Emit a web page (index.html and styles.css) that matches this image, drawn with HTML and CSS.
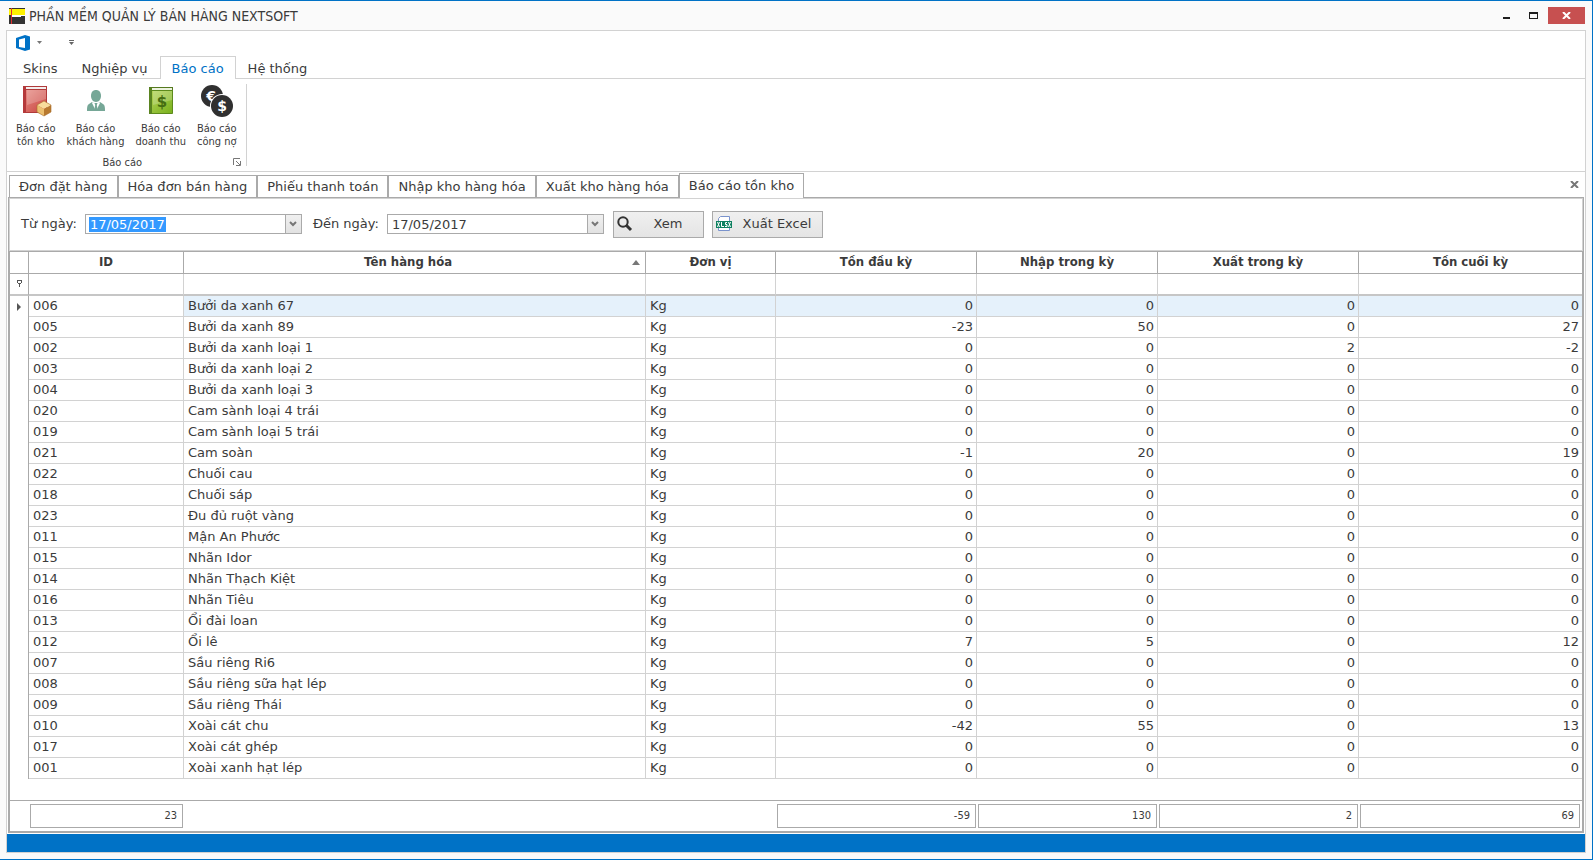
FILE: index.html
```
<!DOCTYPE html>
<html lang="vi">
<head>
    <meta charset="UTF-8">
    <meta name="viewport" content="width=device-width, initial-scale=1.0">
    <title>PHẦN MỀM QUẢN LÝ BÁN HÀNG NEXTSOFT</title>
    <link rel="stylesheet" href="styles.css">
</head>
<body>
<div class="window">
    <header class="titlebar">
        <svg class="app-icon" width="16" height="16" viewBox="0 0 16 16">
            <path fill="#333" d="M0 0h16v16H0z"/>
            <path fill="#fff200" d="M0 1h16v6H0z"/>
            <path fill="#fff" d="M3 7h13v1h-4v1H3z"/>
            <path fill="#e03030" d="M2 0h1v16H2z"/>
        </svg>
        <h1>PHẦN MỀM QUẢN LÝ BÁN HÀNG NEXTSOFT</h1>
        <div class="window-buttons">
            <button type="button" aria-label="Thu nhỏ">
                <svg width="9" height="9" viewBox="0 0 9 9"><path fill="#1e1e1e" d="M1 6h7v2H1z"/></svg>
            </button>
            <button type="button" aria-label="Phóng to">
                <svg width="9" height="7" viewBox="0 0 9 7"><path fill="#1e1e1e" fill-rule="evenodd" d="M0 0h9v7H0zM1 2v4h7V2z"/></svg>
            </button>
            <button type="button" class="close" aria-label="Đóng">
                <svg width="9" height="7" viewBox="0 0 9 7"><path stroke="#fff" stroke-width="2" d="M1 0l7 7M8 0L1 7"/></svg>
            </button>
        </div>
    </header>

    <div class="frame">
        <div class="quickbar">
            <button type="button" class="office" aria-label="Menu">
                <svg width="14" height="16" viewBox="0 0 14 16"><path fill="#0072c6" fill-rule="evenodd" d="M0 3l9-3 5 1.500v13L9 16l-9-3zM3 4.500v7.500l6 1V3z"/></svg>
                <svg width="5" height="3" viewBox="0 0 5 3"><path fill="#777" d="M0 0h5L2.500 3z"/></svg>
            </button>
            <button type="button" class="customize" aria-label="Tùy chỉnh">
                <svg width="5" height="5" viewBox="0 0 5 5"><path fill="#666" d="M0 0h5v1H0zM0 2h5L2.500 5z"/></svg>
            </button>
        </div>
        <nav class="ribbon-tabs">
            <a href="#">Skins</a>
            <a href="#">Nghiệp vụ</a>
            <a href="#" class="active">Báo cáo</a>
            <a href="#">Hệ thống</a>
        </nav>

        <div class="ribbon">
            <div class="group">
                <div class="group-items">
                    <button type="button">
                        <svg width="32" height="32" viewBox="0 0 32 32">
                            <defs>
                                <linearGradient id="red" x2="1" y2="1"><stop stop-color="#e89088"/><stop offset="1" stop-color="#c8443f"/></linearGradient>
                            </defs>
                            <path fill="#b03a3a" d="M3 1h24v4H3z"/>
                            <path fill="#f4eeee" d="M5 2h21v2H5z"/>
                            <path fill="url(#red)" stroke="#b03a3a" d="M3.500 4.500h23v23h-23z"/>
                            <path fill="#b5393b" d="M3 2h3v26H3z"/>
                            <path fill="#fff" opacity=".2" d="M7 5h19v9L7 20z"/>
                            <path fill="#f8dc9c" d="M17 20l7-4 7 4-7 4z"/>
                            <path fill="#ecc070" d="M17 20l7 4v7l-7-4z"/>
                            <path fill="#b87a30" d="M31 20l-7 4v7l7-4z"/>
                            <path fill="none" stroke="#a86c28" stroke-width=".6" d="M17 20l7-4 7 4v7l-7 4-7-4z"/>
                        </svg>
                        <span>Báo cáo<br>tồn kho</span>
                    </button>
                    <button type="button">
                        <svg width="32" height="32" viewBox="0 0 32 32">
                            <path fill="#76a797" d="M11 11c0-4 2-6 5-6s5 2 5 6c0 3-2 6-5 6s-5-3-5-6z"/>
                            <path fill="#76a797" d="M12 17l-3 2c-2 1-2 4-2 7h18c0-3 0-6-2-7l-3-2-4 2z"/>
                            <path fill="#fff" d="M12 18l4 8 4-8-1-1-3 2-3-2z"/>
                            <path fill="#76a797" d="M14.500 18h3l-.7 2 1 6h-3.600l1-6z"/>
                        </svg>
                        <span>Báo cáo<br>khách hàng</span>
                    </button>
                    <button type="button">
                        <svg width="32" height="32" viewBox="0 0 32 32">
                            <defs>
                                <linearGradient id="green" x2="1" y2="1"><stop stop-color="#b7d65c"/><stop offset="1" stop-color="#78b01c"/></linearGradient>
                            </defs>
                            <path fill="#55791f" d="M4 2h24v4H4z"/>
                            <path fill="#edf3e0" d="M6 3h21v2H6z"/>
                            <path fill="url(#green)" stroke="#5d8a1c" d="M4.500 5.500h23v23h-23z"/>
                            <path fill="#5a8420" d="M4 3h3v26H4z"/>
                            <path fill="#fff" opacity=".2" d="M8 6h19v9L8 20z"/>
                            <text class="coin" x="17" y="22" fill="#456d12" font-size="15">$</text>
                        </svg>
                        <span>Báo cáo<br>doanh thu</span>
                    </button>
                    <button type="button">
                        <svg width="32" height="32" viewBox="0 0 32 32">
                            <circle cx="11" cy="11" r="11" fill="#303030"/>
                            <text class="coin" x="10" y="16" fill="#fff" font-size="14">€</text>
                            <circle cx="21" cy="21" r="12" fill="#fff"/>
                            <circle cx="21" cy="21" r="11" fill="#303030"/>
                            <text class="coin" x="21" y="26" fill="#fff" font-size="14">$</text>
                        </svg>
                        <span>Báo cáo<br>công nợ</span>
                    </button>
                </div>
                <div class="group-caption">
                    <span>Báo cáo</span>
                    <button type="button" aria-label="Mở rộng">
                        <svg width="8" height="8" viewBox="0 0 8 8"><path fill="none" stroke="#777" d="M.5 7V.5H7M3 3l4 4M7.500 3v4.500H3"/></svg>
                    </button>
                </div>
            </div>
        </div>

        <main class="workspace">
            <nav class="doc-tabs">
                <a href="#">Đơn đặt hàng</a>
                <a href="#">Hóa đơn bán hàng</a>
                <a href="#">Phiếu thanh toán</a>
                <a href="#">Nhập kho hàng hóa</a>
                <a href="#">Xuất kho hàng hóa</a>
                <a href="#" class="active">Báo cáo tồn kho</a>
                <button type="button" class="tab-close" aria-label="Đóng tab">
                    <svg width="9" height="7" viewBox="0 0 9 7"><path stroke="#777" stroke-width="2" d="M1 0l7 7M8 0L1 7"/></svg>
                </button>
            </nav>

            <section class="pane">
                <form class="filters">
                    <label for="from">Từ ngày:</label>
                    <div class="date">
                        <div class="date-text selected"><input id="from" type="text" value="17/05/2017" size="10"></div>
                        <button type="button" aria-label="Chọn từ ngày">
                            <svg width="8" height="6" viewBox="0 0 8 6"><path fill="none" stroke="#777" stroke-width="2" d="M1 1l3 3 3-3"/></svg>
                        </button>
                    </div>
                    <label for="to">Đến ngày:</label>
                    <div class="date">
                        <div class="date-text"><input id="to" type="text" value="17/05/2017" size="10"></div>
                        <button type="button" aria-label="Chọn đến ngày">
                            <svg width="8" height="6" viewBox="0 0 8 6"><path fill="none" stroke="#777" stroke-width="2" d="M1 1l3 3 3-3"/></svg>
                        </button>
                    </div>
                    <button type="button" class="btn btn-view">
                        <svg width="16" height="16" viewBox="0 0 16 16"><circle cx="6" cy="6" r="4.700" fill="none" stroke="#333" stroke-width="2"/><path stroke="#333" stroke-width="3" d="M9 9l5 5"/></svg>
                        <span>Xem</span>
                    </button>
                    <button type="button" class="btn btn-excel">
                        <svg width="16" height="16" viewBox="0 0 16 16">
                            <path fill="#fff" stroke="#7a93cc" d="M2.500 14.500v-12l2-2h9v14z"/>
                            <path fill="#0f8060" d="M0 5h16v7H0z"/>
                            <path fill="none" stroke="#fff" d="M1.500 6l2 5M3.500 6l-2 5M5.500 6v4.500H8M11 6.500H9.500v2H11v2H9M12.500 6l2 5M14.500 6l-2 5"/>
                        </svg>
                        <span>Xuất Excel</span>
                    </button>
                </form>

                <div class="grid">
                    <table class="data">
                        <colgroup>
                            <col class="c-mark"><col class="c-id"><col><col class="c-unit"><col class="c-open"><col class="c-in"><col class="c-out"><col class="c-close">
                        </colgroup>
                        <thead>
                            <tr>
                                <th></th><th>ID</th>
                                <th class="sorted">Tên hàng hóa <svg width="8" height="5" viewBox="0 0 8 5"><path fill="#777" d="M0 5l4-5 4 5z"/></svg></th>
                                <th>Đơn vị</th><th>Tồn đầu kỳ</th><th>Nhập trong kỳ</th><th>Xuất trong kỳ</th><th>Tồn cuối kỳ</th>
                            </tr>
                            <tr class="filter-row">
                                <td><svg width="5" height="8" viewBox="0 0 5 8"><path fill="#555" d="M0 0h5v1H0zM0 1h1v2H0zM4 1h1v2H4zM1 3h3v1H1zM2 4h1v3H2z"/></svg></td>
                                <td></td><td></td><td></td><td></td><td></td><td></td><td></td>
                            </tr>
                        </thead>
                        <tbody>
                            <tr class="current"><td><svg width="4" height="8" viewBox="0 0 4 8"><path fill="#555" d="M0 0l4 4-4 4z"/></svg></td><td>006</td><td>Bưởi da xanh 67</td><td>Kg</td><td>0</td><td>0</td><td>0</td><td>0</td></tr>
                            <tr><td></td><td>005</td><td>Bưởi da xanh 89</td><td>Kg</td><td>-23</td><td>50</td><td>0</td><td>27</td></tr>
                            <tr><td></td><td>002</td><td>Bưởi da xanh loại 1</td><td>Kg</td><td>0</td><td>0</td><td>2</td><td>-2</td></tr>
                            <tr><td></td><td>003</td><td>Bưởi da xanh loại 2</td><td>Kg</td><td>0</td><td>0</td><td>0</td><td>0</td></tr>
                            <tr><td></td><td>004</td><td>Bưởi da xanh loại 3</td><td>Kg</td><td>0</td><td>0</td><td>0</td><td>0</td></tr>
                            <tr><td></td><td>020</td><td>Cam sành loại 4 trái</td><td>Kg</td><td>0</td><td>0</td><td>0</td><td>0</td></tr>
                            <tr><td></td><td>019</td><td>Cam sành loại 5 trái</td><td>Kg</td><td>0</td><td>0</td><td>0</td><td>0</td></tr>
                            <tr><td></td><td>021</td><td>Cam soàn</td><td>Kg</td><td>-1</td><td>20</td><td>0</td><td>19</td></tr>
                            <tr><td></td><td>022</td><td>Chuối cau</td><td>Kg</td><td>0</td><td>0</td><td>0</td><td>0</td></tr>
                            <tr><td></td><td>018</td><td>Chuối sáp</td><td>Kg</td><td>0</td><td>0</td><td>0</td><td>0</td></tr>
                            <tr><td></td><td>023</td><td>Đu đủ ruột vàng</td><td>Kg</td><td>0</td><td>0</td><td>0</td><td>0</td></tr>
                            <tr><td></td><td>011</td><td>Mận An Phước</td><td>Kg</td><td>0</td><td>0</td><td>0</td><td>0</td></tr>
                            <tr><td></td><td>015</td><td>Nhãn Idor</td><td>Kg</td><td>0</td><td>0</td><td>0</td><td>0</td></tr>
                            <tr><td></td><td>014</td><td>Nhãn Thạch Kiệt</td><td>Kg</td><td>0</td><td>0</td><td>0</td><td>0</td></tr>
                            <tr><td></td><td>016</td><td>Nhãn Tiêu</td><td>Kg</td><td>0</td><td>0</td><td>0</td><td>0</td></tr>
                            <tr><td></td><td>013</td><td>Ổi đài loan</td><td>Kg</td><td>0</td><td>0</td><td>0</td><td>0</td></tr>
                            <tr><td></td><td>012</td><td>Ổi lê</td><td>Kg</td><td>7</td><td>5</td><td>0</td><td>12</td></tr>
                            <tr><td></td><td>007</td><td>Sầu riêng Ri6</td><td>Kg</td><td>0</td><td>0</td><td>0</td><td>0</td></tr>
                            <tr><td></td><td>008</td><td>Sầu riêng sữa hạt lép</td><td>Kg</td><td>0</td><td>0</td><td>0</td><td>0</td></tr>
                            <tr><td></td><td>009</td><td>Sầu riêng Thái</td><td>Kg</td><td>0</td><td>0</td><td>0</td><td>0</td></tr>
                            <tr><td></td><td>010</td><td>Xoài cát chu</td><td>Kg</td><td>-42</td><td>55</td><td>0</td><td>13</td></tr>
                            <tr><td></td><td>017</td><td>Xoài cát ghép</td><td>Kg</td><td>0</td><td>0</td><td>0</td><td>0</td></tr>
                            <tr><td></td><td>001</td><td>Xoài xanh hạt lép</td><td>Kg</td><td>0</td><td>0</td><td>0</td><td>0</td></tr>
                        </tbody>
                    </table>
                    <table class="summary">
                        <colgroup>
                            <col class="c-mark"><col class="c-id"><col><col class="c-unit"><col class="c-open"><col class="c-in"><col class="c-out"><col class="c-close">
                        </colgroup>
                        <tbody>
                            <tr>
                                <td></td><td><div>23</div></td><td></td><td></td><td><div>-59</div></td><td><div>130</div></td><td><div>2</div></td><td><div>69</div></td>
                            </tr>
                        </tbody>
                    </table>
                </div>
            </section>
        </main>
        <footer class="statusbar"></footer>
    </div>
</div>
</body>
</html>
```
FILE: styles.css
```
* {
    box-sizing: border-box;
}
body {
    margin: 0;
    color: #3b3b3b;
    font: 13px/20px Verdana, "DejaVu Sans", sans-serif;
}
a {
    color: inherit;
    text-decoration: none;
}
button {
    margin: 0;
    padding: 0;
    border: 0;
    background: none;
    color: inherit;
    font: inherit;
}
svg {
    display: block;
    flex: none;
}
.window {
    display: flex;
    flex-direction: column;
    min-height: 100vh;
    padding: 0 6px 6px;
    border: 1px solid #0072c6;
    border-left: 0;
    background: #fafafa;
}

/* title bar */
.titlebar {
    display: flex;
    align-items: center;
    height: 29px;
    padding: 0 1px 0 3px;
}
.titlebar h1 {
    flex: 1;
    margin: 0;
    padding-left: 4px;
    font: 14px/20px Tahoma, "DejaVu Sans Condensed", "Noto Sans", sans-serif;
}
.window-buttons {
    display: flex;
}
.window-buttons button {
    display: flex;
    align-items: center;
    justify-content: center;
    width: 27px;
    height: 17px;
}
.window-buttons .close {
    width: 37px;
    margin-left: 1px;
    background: #c75050;
}

/* ribbon */
.frame {
    display: flex;
    flex: 1;
    flex-direction: column;
    border: 1px solid #d2d2d2;
    background: #fff;
}
.quickbar {
    display: flex;
    align-items: center;
    gap: 27px;
    height: 25px;
    padding: 0 0 2px 9px;
}
.office {
    display: flex;
    align-items: center;
    gap: 7px;
}
.ribbon-tabs {
    display: flex;
    height: 23px;
    padding-left: 4px;
    border-bottom: 1px solid #d2d2d2;
}
.ribbon-tabs a {
    height: 23px;
    padding: 2px 11px 0;
    border: 1px solid transparent;
    border-bottom: 0;
}
.ribbon-tabs .active {
    border-color: #d2d2d2;
    background: #fff;
    color: #0072c6;
}
.ribbon {
    display: flex;
    height: 93px;
    padding: 5px 0;
    border-bottom: 1px solid #d2d2d2;
    font: 11px/13px Tahoma, "DejaVu Sans Condensed", "Noto Sans", sans-serif;
}
.group {
    display: flex;
    flex-direction: column;
    justify-content: space-between;
    border-right: 1px solid #d2d2d2;
}
.group-items {
    display: flex;
    gap: 11px;
    padding: 1px 9px 0 9px;
}
.group-items button {
    display: flex;
    flex-direction: column;
    align-items: center;
    gap: 5px;
}
.group-caption {
    display: flex;
    align-items: center;
    height: 8px;
    padding: 0 5px;
}
.group-caption span {
    flex: 1;
    text-align: center;
}
.coin {
    font-family: "DejaVu Sans", sans-serif;
    font-weight: bold;
    text-anchor: middle;
}

/* document tabs */
.workspace {
    display: flex;
    flex: 1;
    flex-direction: column;
    padding: 0 1px 1px;
}
.doc-tabs {
    display: flex;
    align-items: flex-end;
    height: 25px;
    padding-left: 1px;
}
.doc-tabs a {
    height: 22px;
    padding: 0 9px;
    border: 1px solid #aaa;
    border-bottom: 0;
    line-height: 22px;
}
.doc-tabs .active {
    position: relative;
    height: 25px;
    margin-bottom: -1px;
    background: #fff;
    line-height: 24px;
}
.tab-close {
    margin: 0 5px 9px auto;
}
.pane {
    display: flex;
    flex: 1;
    flex-direction: column;
    border: 1px solid #aaa;
}
.filters {
    display: flex;
    align-items: center;
    height: 53px;
    padding: 0 0 1px 11px;
    border: 1px solid #d2d2d2;
}
.date {
    display: flex;
    width: 217px;
    height: 20px;
    margin: 0 11px 0 8px;
    border: 1px solid #aaa;
}
.date-text {
    display: flex;
    flex: 1;
    align-items: center;
    min-width: 0;
    padding-left: 3px;
}
.date input {
    width: 77px;
    height: 15px;
    padding: 0 1px;
    border: 0;
    outline: 0;
    background: none;
    color: inherit;
    font: inherit;
    line-height: 15px;
}
.date .selected input {
    background: #3399ff;
    color: #fff;
}
.date button {
    display: flex;
    align-items: center;
    justify-content: center;
    width: 16px;
    border-left: 1px solid #aaa;
    background: linear-gradient(#f0f0f0, #e2e2e2);
}
.btn {
    display: flex;
    align-items: center;
    height: 27px;
    margin-right: 8px;
    padding: 0 0 0 3px;
    border: 1px solid #aaa;
    background: linear-gradient(#f0f0f0, #e4e4e4);
}
.btn span {
    flex: 1;
    text-align: center;
}
.btn-view {
    width: 91px;
    margin-left: -2px;
}
.btn-excel {
    width: 111px;
}

/* grid */
.grid {
    display: flex;
    flex: 1;
    flex-direction: column;
    justify-content: space-between;
    border: 1px solid #aaa;
}
table {
    width: 100%;
    border-spacing: 0;
    table-layout: fixed;
}
.c-mark {
    width: 19px;
}
.c-id {
    width: 155px;
}
.c-unit {
    width: 130px;
}
.c-open, .c-out {
    width: 201px;
}
.c-in {
    width: 181px;
}
.c-close {
    width: 223px;
}
th {
    height: 22px;
    padding: 0;
    border: solid #aaa;
    border-width: 0 1px 1px 0;
    font-family: Tahoma, "DejaVu Sans Condensed", "Noto Sans", sans-serif;
    line-height: 20px;
    vertical-align: top;
}
.sorted {
    position: relative;
    padding-right: 13px;
}
.sorted svg {
    position: absolute;
    top: 8px;
    right: 5px;
}
.data td {
    height: 21px;
    padding: 0 3px 0 4px;
    border: solid #d2d2d2;
    border-width: 0 1px 1px 0;
}
.data td:nth-child(n+5) {
    text-align: right;
}
.data td:first-child {
    padding: 0 7px;
    border-right-color: #aaa;
    border-bottom: 0;
}
.data th:last-child,
.data td:last-child {
    border-right: 0;
}
.data .filter-row td,
.data .filter-row td:first-child {
    height: 22px;
    border-bottom: 2px solid #c6c6c6;
}
.current td:nth-child(n+3) {
    background: #e5f1fb;
}
.summary {
    border-top: 1px solid #aaa;
    font: 11px/22px Tahoma, "DejaVu Sans Condensed", "Noto Sans", sans-serif;
}
.summary td {
    height: 30px;
    padding: 3px 1px;
    text-align: right;
}
.summary td:last-child {
    padding-right: 2px;
}
.summary div {
    padding-right: 5px;
    border: 1px solid #aaa;
}
.statusbar {
    height: 18px;
    background: #0072c6;
}
```
